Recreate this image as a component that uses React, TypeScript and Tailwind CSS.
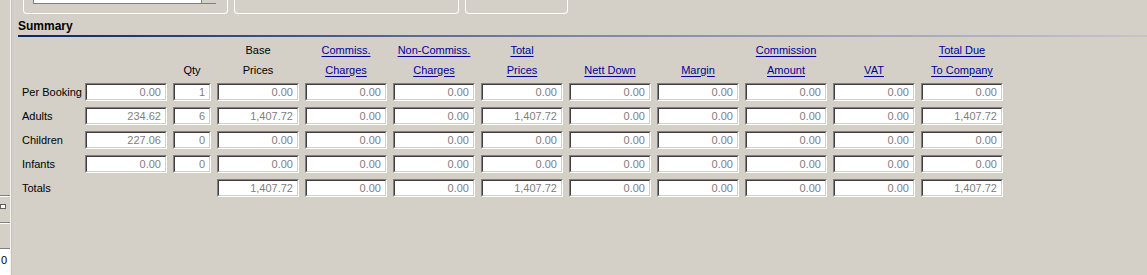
import React from "react";

const font = { fontFamily: '"Liberation Sans", Arial, sans-serif' };

const Field = ({ v }: { v: string }) => (
  <div className="h-[18px] border border-t-[#808080] border-l-[#808080] border-r-white border-b-white">
    <div className="h-full border border-t-[#404040] border-l-[#404040] border-r-[#d4d0c8] border-b-[#d4d0c8] bg-white text-right pr-[4px] text-[11px] leading-[14px] text-[#808080]">
      {v}
    </div>
  </div>
);

type H = { t: string; link?: boolean } | null;

const Head = ({ h }: { h: H }) => (
  <div className="h-[20px] flex items-center justify-center text-[11px] whitespace-nowrap">
    {h ? (
      h.link ? (
        <span className="underline text-[#000099] underline-offset-2">{h.t}</span>
      ) : (
        <span className="text-black">{h.t}</span>
      )
    ) : null}
  </div>
);

const row1: H[] = [
  null,
  null,
  null,
  { t: "Base" },
  { t: "Commiss.", link: true },
  { t: "Non-Commiss.", link: true },
  { t: "Total", link: true },
  null,
  null,
  { t: "Commission", link: true },
  null,
  { t: "Total Due", link: true },
];
const row2: H[] = [
  null,
  null,
  { t: "Qty" },
  { t: "Prices" },
  { t: "Charges", link: true },
  { t: "Charges", link: true },
  { t: "Prices", link: true },
  { t: "Nett Down", link: true },
  { t: "Margin", link: true },
  { t: "Amount", link: true },
  { t: "VAT", link: true },
  { t: "To Company", link: true },
];

const rows: { label: string; vals: (string | null)[] }[] = [
  { label: "Per Booking", vals: ["0.00", "1", "0.00", "0.00", "0.00", "0.00", "0.00", "0.00", "0.00", "0.00", "0.00"] },
  { label: "Adults", vals: ["234.62", "6", "1,407.72", "0.00", "0.00", "1,407.72", "0.00", "0.00", "0.00", "0.00", "1,407.72"] },
  { label: "Children", vals: ["227.06", "0", "0.00", "0.00", "0.00", "0.00", "0.00", "0.00", "0.00", "0.00", "0.00"] },
  { label: "Infants", vals: ["0.00", "0", "0.00", "0.00", "0.00", "0.00", "0.00", "0.00", "0.00", "0.00", "0.00"] },
  { label: "Totals", vals: [null, null, "1,407.72", "0.00", "0.00", "1,407.72", "0.00", "0.00", "0.00", "0.00", "1,407.72"] },
];

const gridCls = "grid grid-cols-[57px_82px_38px_repeat(9,82px)] gap-x-[6px]";

export default function App() {
  return (
    <div className="w-[1147px] h-[275px] bg-[#d4d0c8] flex overflow-hidden" style={font}>
      {/* left strip */}
      <div className="w-[10px] flex flex-col shrink-0">
        <div className="h-[195px]" />
        <div className="h-[2px] border-t border-t-[#808080] border-b border-b-white" />
        <div className="h-[7px]" />
        <div className="h-[5px] w-[6px] border border-[#606060] bg-white" />
        <div className="h-[13px]" />
        <div className="h-[2px] border-t border-t-[#808080] border-b border-b-white" />
        <div className="h-[24px]" />
        <div className="h-[2px] border-t border-t-[#808080] border-b border-b-white" />
        <div className="flex-1 bg-white text-[11px] leading-[14px] pl-[1px] pt-[3px] text-black">0</div>
      </div>
      <div className="w-[2px] shrink-0 border-l border-l-[#f4f3ef] border-r border-r-[#c8c4bc]" />
      {/* main */}
      <div className="flex-1 flex flex-col">
        {/* top clipped group boxes */}
        <div className="flex gap-[6px] pl-[11px] h-[14px]">
          <div className="w-[205px] h-[14px] border-x border-b border-white rounded-b-[4px] relative">
            <div className="absolute left-[9px] top-0 w-[183px] h-[4px] bg-white border-l border-b border-[#808080] flex justify-end">
              <div className="w-[15px] h-[3px] bg-[#d4d0c8] border-l border-[#808080]" />
            </div>
          </div>
          <div className="w-[225px] h-[14px] border-x border-b border-white rounded-b-[4px]" />
          <div className="w-[103px] h-[14px] border-x border-b border-white rounded-b-[4px]" />
        </div>
        {/* summary title */}
        <div className="pl-[6px] mt-[5px] text-[12px] leading-[14px] font-bold text-black">Summary</div>
        <div className="ml-[6px] mt-[2px] h-[2px] bg-gradient-to-r from-[#0a246a] via-[#7d86a6] to-[#c4c4cc]" />
        {/* table */}
        <div className="pl-[10px] mt-[3px]">
          <div className={gridCls}>
            {row1.map((h, i) => (
              <Head key={"a" + i} h={h} />
            ))}
            {row2.map((h, i) => (
              <Head key={"b" + i} h={h} />
            ))}
          </div>
          <div className={gridCls + " mt-[3px] gap-y-[6px]"}>
            {rows.map((r) => (
              <React.Fragment key={r.label}>
                <div className="h-[18px] text-[11px] leading-[18px] text-black whitespace-nowrap">{r.label}</div>
                {r.vals.map((v, i) => (v === null ? <div key={i} /> : <Field key={i} v={v} />))}
              </React.Fragment>
            ))}
          </div>
        </div>
      </div>
    </div>
  );
}
